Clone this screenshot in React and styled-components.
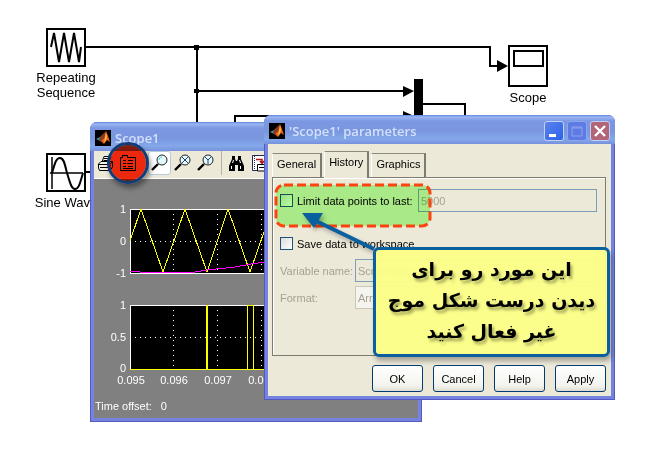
import React from 'react';
import styled, { createGlobalStyle, css } from 'styled-components';

const GlobalStyle = createGlobalStyle`
  * {
    box-sizing: border-box;
  }
  body {
    margin: 0;
    background: #fff;
    font-family: 'Liberation Sans', Arial, sans-serif;
    font-size: 11px;
    color: #000;
  }
  button,
  input,
  select {
    font: inherit;
    color: inherit;
    margin: 0;
    padding: 0;
  }
`;

const MatlabLogo = () => (
  <svg width="16" height="16" viewBox="0 0 16 16" aria-hidden="true">
    <rect width="16" height="16" fill="#000" />
    <path d="M1 9 L5 7 L8 5 L7 10 L5 11 Z" fill="#3f8fa5" />
    <path d="M5 7 L9 3 L11 1 L9 8 L6 12 L4 10 Z" fill="#8b3a20" />
    <path d="M11 1 L13 6 L15 12 L12 10 L9 14 L6 11 L9 8 Z" fill="#e8641c" />
    <path d="M11 2 L12 7 L11 10 L9 13 L10 8 Z" fill="#ffc04a" />
  </svg>
);

const Wires = () => (
  <WireLayer width="666" height="220" aria-hidden="true">
    <g fill="none" stroke="#000" strokeWidth="2" shapeRendering="crispEdges">
      <path d="M85 47 H490 V66 H500" />
      <path d="M197 47 V200" />
      <path d="M197 91 H406" />
      <path d="M235 130 V116 H406" />
      <path d="M422 104 H465 V130" />
      <path d="M85 172 H110" />
    </g>
    <path d="M194 45 h5 v5 h-5 z M194 89 h5 v4 h-5 z M414 79 h9 v50 h-9 z" />
    <path d="M497 60 L508 66 L497 72 z M403 86 L414 91 L403 97 z M403 111 L414 116 L403 122 z" />
  </WireLayer>
);

const Magnifier = ({ children }) => (
  <svg width="18" height="18" viewBox="0 0 18 18" aria-hidden="true">
    <path d="M1 16 L7 10" stroke="#000" strokeWidth="2.4" />
    <circle cx="11" cy="6" r="5" fill="#e4fafa" stroke="#222" />
    {children}
  </svg>
);

const tools = [
  {
    name: 'Print',
    icon: (
      <svg width="17" height="17" viewBox="0 0 17 17" aria-hidden="true">
        <path d="M5 7 L7 1.500 H14 L12 7" fill="#fff" stroke="#000" />
        <path d="M7 3.500 H12 M6.500 5.500 H11.500" stroke="#000" />
        <path d="M1.500 9 L4 6.500 H15.500 V12 L13 15.500 H2.500 L1.500 13 Z" fill="#f4f2e6" stroke="#000" />
        <path d="M2 9.500 H13 L15 7 M13 9.500 V15 M3 12.500 H12" stroke="#000" fill="none" />
      </svg>
    ),
  },
  {
    name: 'Parameters',
    icon: (
      <svg width="17" height="17" viewBox="0 0 17 17" aria-hidden="true">
        <g fill="none" stroke="#000" shapeRendering="crispEdges">
          <path d="M0.500 15.500 V2.500 H2.500 V0.500 H7.500 V2.500 H15.500 V15.500 Z" />
          <path d="M3 5.500 H6 M3 8.500 H6 M3 11.500 H6 M8 5.500 H13 M7 8.500 H13 M8 11.500 H13 M3 13.500 H13" />
        </g>
      </svg>
    ),
  },
  { gap: true },
  {
    name: 'Zoom',
    active: true,
    icon: (
      <Magnifier>
        <path d="M8 6 Q8 3 11 3" stroke="#5ed3dc" fill="none" />
      </Magnifier>
    ),
  },
  {
    name: 'Zoom X-axis',
    icon: (
      <Magnifier>
        <path d="M8 3 L14 9 M14 3 L8 9" stroke="#1b3f8b" />
      </Magnifier>
    ),
  },
  {
    name: 'Zoom Y-axis',
    icon: (
      <Magnifier>
        <path d="M8 3 L11 6 L14 3 M11 6 V10" stroke="#1b3f8b" fill="none" />
      </Magnifier>
    ),
  },
  { gap: true, line: true },
  {
    name: 'Autoscale',
    icon: (
      <svg width="17" height="17" viewBox="0 0 17 17" aria-hidden="true">
        <path d="M4 1 H7 V4 L8 6 H9 L10 4 V1 H13 V4 L16 11 V16 H10 V10 H7 V16 H1 V11 L4 4 Z" />
        <path d="M3.500 11 V14 M12.500 11 V14 M5.500 5 L4.500 8 M11.500 5 L12.500 8" stroke="#fff" />
      </svg>
    ),
  },
  {
    name: 'Save axes settings',
    icon: (
      <svg width="17" height="17" viewBox="0 0 17 17" aria-hidden="true">
        <path d="M1.500 0.500 H15.500 V15.500 H1.500 Z" fill="#fff" stroke="#26265f" />
        <path d="M3.500 1 V15" stroke="#26265f" strokeDasharray="1 1" />
        <path d="M5 4.500 H11 V8 M9 6 L11 8.500 L13 6" stroke="#b01818" fill="none" strokeWidth="1.500" />
        <path d="M6.500 9.500 H15.500 V16 H6.500 Z M8 12.500 H14" fill="#fff" stroke="#000" />
      </svg>
    ),
  },
];

const ScopeChart = () => (
  <ChartSvg width="324" height="214" role="img" aria-label="Scope signals">
    {[30, 126].map((top) => (
      <g key={top}>
        <rect x="36" y={top} width="270" height="64" fill="#000" />
        <path
          d={`M36 ${top + 32} H306 M79 ${top} V${top + 64} M123 ${top} V${top + 64} M167 ${top} V${top + 64}`}
          stroke="#fff"
          strokeDasharray="1 4"
          shapeRendering="crispEdges"
        />
        <rect x="36" y={top} width="270" height="64" fill="none" stroke="#fff" shapeRendering="crispEdges" />
      </g>
    ))}
    <g fill="none" shapeRendering="crispEdges">
      <path d="M36 62 L47 30 L69 93 L91 30 L113 93 L134 30 L156 93 L178 30" stroke="#ff0" />
      <path d="M36 92 H43 L46 93 H101 L113 91 L141 88 L157 85 L172 83" stroke="#f0f" />
      <path d="M36 190 H306 M153 190 V126 H159 V190" stroke="#ff0" />
      <path d="M113 190 V126" stroke="#ff0" strokeWidth="2" />
    </g>
    <g fill="#fff" textAnchor="end">
      <text x="32" y="34">1</text>
      <text x="32" y="66">0</text>
      <text x="32" y="98">-1</text>
      <text x="32" y="130">1</text>
      <text x="32" y="162">0.5</text>
      <text x="32" y="193">0</text>
    </g>
    <g fill="#fff" textAnchor="middle">
      <text x="37" y="205">0.095</text>
      <text x="80" y="205">0.096</text>
      <text x="124" y="205">0.097</text>
      <text x="168" y="205">0.098</text>
    </g>
  </ChartSvg>
);

const App = () => {
  return (
    <Canvas>
      <GlobalStyle />
      <Wires />

      <Block $x={46} $y={28}>
        <BlockFace>
          <svg width="36" height="36" viewBox="0 0 36 36" aria-hidden="true">
            <path
              d="M3 17 L6 3 L11 32 L16 3 L21 32 L26 3 L31 32 L33 17"
              fill="none"
              stroke="#000"
              strokeWidth="2"
            />
          </svg>
        </BlockFace>
        <BlockName>Repeating Sequence</BlockName>
      </Block>

      <Block $x={46} $y={153}>
        <BlockFace>
          <svg width="36" height="36" viewBox="0 0 36 36" aria-hidden="true">
            <path d="M4 2 V34 M2 18 H35" stroke="#000" strokeWidth="1.500" />
            <path
              d="M4 18 C7 8 8 3 12 3 C16 3 17 10 19 18 C22 27 23 34 27 34 C31 34 32 28 35 18"
              fill="none"
              stroke="#000"
              strokeWidth="2"
            />
          </svg>
        </BlockFace>
        <BlockName>Sine Wave</BlockName>
      </Block>

      <Block $x={508} $y={45}>
        <BlockFace $tall>
          <svg width="36" height="38" viewBox="0 0 36 38" aria-hidden="true">
            <rect x="4" y="4" width="29" height="15" fill="none" stroke="#000" strokeWidth="2" />
          </svg>
        </BlockFace>
        <BlockName>Scope</BlockName>
      </Block>

      <ScopeWindow>
        <TitleBar>
          <MatlabLogo />
          <Title>Scope1</Title>
        </TitleBar>
        <Toolbar>
          {tools.map((tool, i) =>
            tool.gap ? (
              <ToolGap key={i} $line={tool.line} />
            ) : (
              <ToolButton key={tool.name} type="button" aria-label={tool.name} $active={tool.active}>
                {tool.icon}
              </ToolButton>
            )
          )}
        </Toolbar>
        <ScopeBody>
          <ScopeChart />
          <Status>
            <span>Time offset:</span>
            <span>0</span>
          </Status>
        </ScopeBody>
      </ScopeWindow>

      <ToolMarker />

      <ParamsWindow>
        <TitleBar>
          <MatlabLogo />
          <Title>'Scope1' parameters</Title>
          <WindowButtons>
            <WindowButton type="button" aria-label="Minimize">
              <svg width="18" height="18" aria-hidden="true">
                <rect x="4" y="12" width="7" height="3" fill="#fff" />
              </svg>
            </WindowButton>
            <WindowButton type="button" aria-label="Maximize" $kind="off" disabled>
              <svg width="18" height="18" aria-hidden="true">
                <path d="M4 5 H14 V14 H4 Z M4 6 H14" fill="none" stroke="#8fa0f0" strokeWidth="1" />
              </svg>
            </WindowButton>
            <WindowButton type="button" aria-label="Close" $kind="close">
              <svg width="18" height="18" aria-hidden="true">
                <path d="M4 4 L14 14 M14 4 L4 14" stroke="#fff" strokeWidth="2.400" />
              </svg>
            </WindowButton>
          </WindowButtons>
        </TitleBar>

        <ParamsBody>
          <Tabs role="tablist">
            <Tab type="button" role="tab" aria-selected="false">
              General
            </Tab>
            <Tab type="button" role="tab" aria-selected="true" $selected>
              History
            </Tab>
            <Tab type="button" role="tab" aria-selected="false">
              Graphics
            </Tab>
          </Tabs>

          <Panel role="tabpanel">
            <LimitRow>
              <CheckLabel>
                <Checkbox type="checkbox" />
                Limit data points to last:
              </CheckLabel>
              <TextBox aria-label="Data points" defaultValue="5000" disabled />
            </LimitRow>
            <Row>
              <CheckLabel>
                <Checkbox type="checkbox" />
                Save data to workspace
              </CheckLabel>
            </Row>
            <Row>
              <FieldLabel htmlFor="variable">Variable name:</FieldLabel>
              <TextBox id="variable" defaultValue="ScopeData" disabled />
            </Row>
            <Row>
              <FieldLabel htmlFor="format">Format:</FieldLabel>
              <Select id="format" disabled>
                <option>Array</option>
              </Select>
            </Row>
          </Panel>

          <Footer>
            <PushButton type="button">OK</PushButton>
            <PushButton type="button">Cancel</PushButton>
            <PushButton type="button">Help</PushButton>
            <PushButton type="button">Apply</PushButton>
          </Footer>
        </ParamsBody>
      </ParamsWindow>

      <Highlight>
        <svg width="160" height="46" aria-hidden="true">
          <rect x="3" y="2" width="154" height="41" rx="8" />
        </svg>
      </Highlight>
      <Pointer width="80" height="46" aria-hidden="true">
        <path d="M16 10 L74 38" stroke="#0a5f9e" strokeWidth="4" />
        <path d="M2 2 L23 2 L14 17 Z" fill="#0a5f9e" />
      </Pointer>
      <Callout lang="fa" dir="rtl">
        این مورد رو برای
        <br />
        دیدن درست شکل موج
        <br />
        غیر فعال کنید
      </Callout>
    </Canvas>
  );
};

const Canvas = styled.main`
  position: relative;
  min-height: 100vh;
  overflow: hidden;
  background: #fff;
`;

const WireLayer = styled.svg`
  position: absolute;
  top: 0;
  left: 0;
`;

const Block = styled.div`
  position: absolute;
  left: ${(props) => props.$x}px;
  top: ${(props) => props.$y}px;
  width: 40px;
  display: flex;
  flex-direction: column;
  align-items: center;
`;

const BlockFace = styled.div`
  width: 40px;
  height: ${(props) => (props.$tall ? 42 : 39)}px;
  border: 2px solid #000;
  background: #fff;
  svg {
    display: block;
  }
`;

const BlockName = styled.div`
  width: 72px;
  margin-top: 3px;
  font-size: 13px;
  line-height: 15px;
  text-align: center;
`;

const windowFrame = css`
  position: absolute;
  border: 1px solid #5558c0;
  border-top: 0;
  border-radius: 7px 7px 0 0;
  background: #7484de;
  padding: 0 3px 3px;
`;

const ScopeWindow = styled.section`
  ${windowFrame}
  left: 90px;
  top: 122px;
  width: 332px;
`;

const ParamsWindow = styled.section`
  ${windowFrame}
  left: 264px;
  top: 115px;
  width: 351px;
`;

const TitleBar = styled.header`
  height: 29px;
  margin: 0 -4px;
  padding: 2px 5px 0;
  display: flex;
  align-items: center;
  gap: 4px;
  border-radius: 7px 7px 0 0;
  background: linear-gradient(#5f86dc 0, #9bb6f2 2px, #7c98e2 6px, #7a96df 16px, #84a8ea 24px, #7791dd 29px);
`;

const Title = styled.h1`
  margin: 0;
  font-family: 'Open Sans', sans-serif;
  font-size: 13px;
  font-weight: 600;
  line-height: 18px;
  color: #d3e0fb;
`;

const WindowButtons = styled.div`
  display: flex;
  gap: 3px;
  margin-left: auto;
`;

const buttonColors = {
  off: '#5c7ce4',
  close: '#b26479',
};

const WindowButton = styled.button`
  width: 20px;
  height: 20px;
  border: 1px solid ${(props) => (props.$kind === 'off' ? '#8ea6f0' : '#c3d0f6')};
  border-radius: 3px;
  background: ${(props) => buttonColors[props.$kind] || 'linear-gradient(135deg, #5a83ea, #2d62ea)'};
  svg {
    display: block;
  }
`;

const Toolbar = styled.div`
  height: 28px;
  display: flex;
  align-items: flex-start;
  overflow: hidden;
  background: #ece9d8;
  border-bottom: 1px solid #fff;
`;

const ToolButton = styled.button`
  flex: none;
  width: 23px;
  height: 24px;
  display: flex;
  align-items: center;
  justify-content: center;
  border: 1px solid ${(props) => (props.$active ? '#b9c9dc' : 'transparent')};
  border-radius: 3px;
  background: ${(props) => (props.$active ? '#fff' : 'none')};
  svg {
    flex: none;
  }
`;

const ToolGap = styled.div`
  flex: none;
  width: 8px;
  height: 24px;
  background: ${(props) => (props.$line ? 'linear-gradient(#b5b2a2, #b5b2a2) center / 1px 100% no-repeat' : 'none')};
`;

const ScopeBody = styled.div`
  background: #808080;
  color: #fff;
`;

const ChartSvg = styled.svg`
  display: block;
  max-width: 100%;
  font-size: 11px;
`;

const Status = styled.div`
  display: flex;
  gap: 9px;
  padding: 6px 1px 5px;
  line-height: 14px;
`;

const ToolMarker = styled.div`
  position: absolute;
  left: 107px;
  top: 142px;
  width: 42px;
  height: 42px;
  border: 3px solid #123c78;
  border-radius: 50%;
  box-shadow: 2px 4px 5px rgba(0, 0, 0, 0.4);
  &::before {
    content: '';
    position: absolute;
    inset: 0;
    border-radius: 50%;
    background: #ff2d10;
    mix-blend-mode: multiply;
  }
`;

const ParamsBody = styled.div`
  background: #ece9d8;
  padding: 7px 5px 4px 4px;
`;

const Tabs = styled.div`
  display: flex;
  align-items: flex-end;
  gap: 2px;
`;

const Tab = styled.button`
  height: ${(props) => (props.$selected ? 27 : 24)}px;
  margin-bottom: ${(props) => (props.$selected ? -1 : 0)}px;
  padding: 0 4px ${(props) => (props.$selected ? 6 : 3)}px;
  border: 1px solid #fff;
  border-right: 2px solid #7d7b70;
  border-bottom: 0;
  border-top-color: #8d8b80;
  background: #ece9d8;
`;

const Panel = styled.div`
  display: flex;
  flex-direction: column;
  gap: 4px;
  padding: 11px 8px 46px 7px;
  border: 1px solid #7d7b70;
  box-shadow: inset 1px 1px #fff;
`;

const Row = styled.div`
  display: flex;
  align-items: center;
  height: 23px;
`;

const LimitRow = styled(Row)`
  margin-bottom: 16px;
`;

const CheckLabel = styled.label`
  width: 138px;
  display: flex;
  align-items: center;
  gap: 4px;
  white-space: nowrap;
`;

const Checkbox = styled.input`
  appearance: none;
  flex: none;
  width: 13px;
  height: 13px;
  border: 1px solid #1c5180;
  background: linear-gradient(135deg, #dcdcd7, #fff);
`;

const FieldLabel = styled.label`
  width: 75px;
  color: #a5a294;
`;

const TextBox = styled.input`
  flex: 1;
  min-width: 0;
  height: 23px;
  padding: 0 2px;
  border: 1px solid #7f9db9;
  background: #ece9d8;
  color: #a5a294;
`;

const Select = styled.select`
  flex: 1;
  appearance: none;
  height: 23px;
  padding: 0 2px;
  border: 1px solid #c9c7ba;
  border-radius: 0;
  background: #f5f4ee;
  color: #a5a294;
  opacity: 1;
`;

const Footer = styled.footer`
  display: flex;
  justify-content: flex-end;
  gap: 10px;
  margin-top: 9px;
`;

const PushButton = styled.button`
  width: 51px;
  height: 27px;
  border: 1px solid #003c74;
  border-radius: 3px;
  background: linear-gradient(#fff, #f3f3ee 80%, #dedbd0);
`;

const Highlight = styled.div`
  position: absolute;
  left: 273px;
  top: 183px;
  &::before {
    content: '';
    position: absolute;
    inset: 2px 3px 3px;
    border-radius: 8px;
    background: #b7ff9f;
    mix-blend-mode: multiply;
  }
  svg {
    position: relative;
    display: block;
  }
  rect {
    fill: none;
    stroke: #fb4410;
    stroke-width: 3px;
    stroke-dasharray: 9 4;
  }
`;

const Pointer = styled.svg`
  position: absolute;
  left: 300px;
  top: 211px;
  filter: drop-shadow(2px 3px 2px rgba(0, 0, 0, 0.3));
`;

const Callout = styled.div`
  position: absolute;
  left: 373px;
  top: 247px;
  width: 237px;
  padding: 4px 0 7px;
  border: 3px solid #0a5f9e;
  border-radius: 6px;
  background: rgba(251, 254, 134, 0.96);
  box-shadow: 2px 4px 5px rgba(0, 0, 0, 0.3);
  font-family: 'DejaVu Sans', sans-serif;
  font-size: 19px;
  font-weight: 700;
  line-height: 31px;
  text-align: center;
  text-shadow: 2px 3px 3px rgba(0, 0, 0, 0.35);
  white-space: nowrap;
`;

export default App;
